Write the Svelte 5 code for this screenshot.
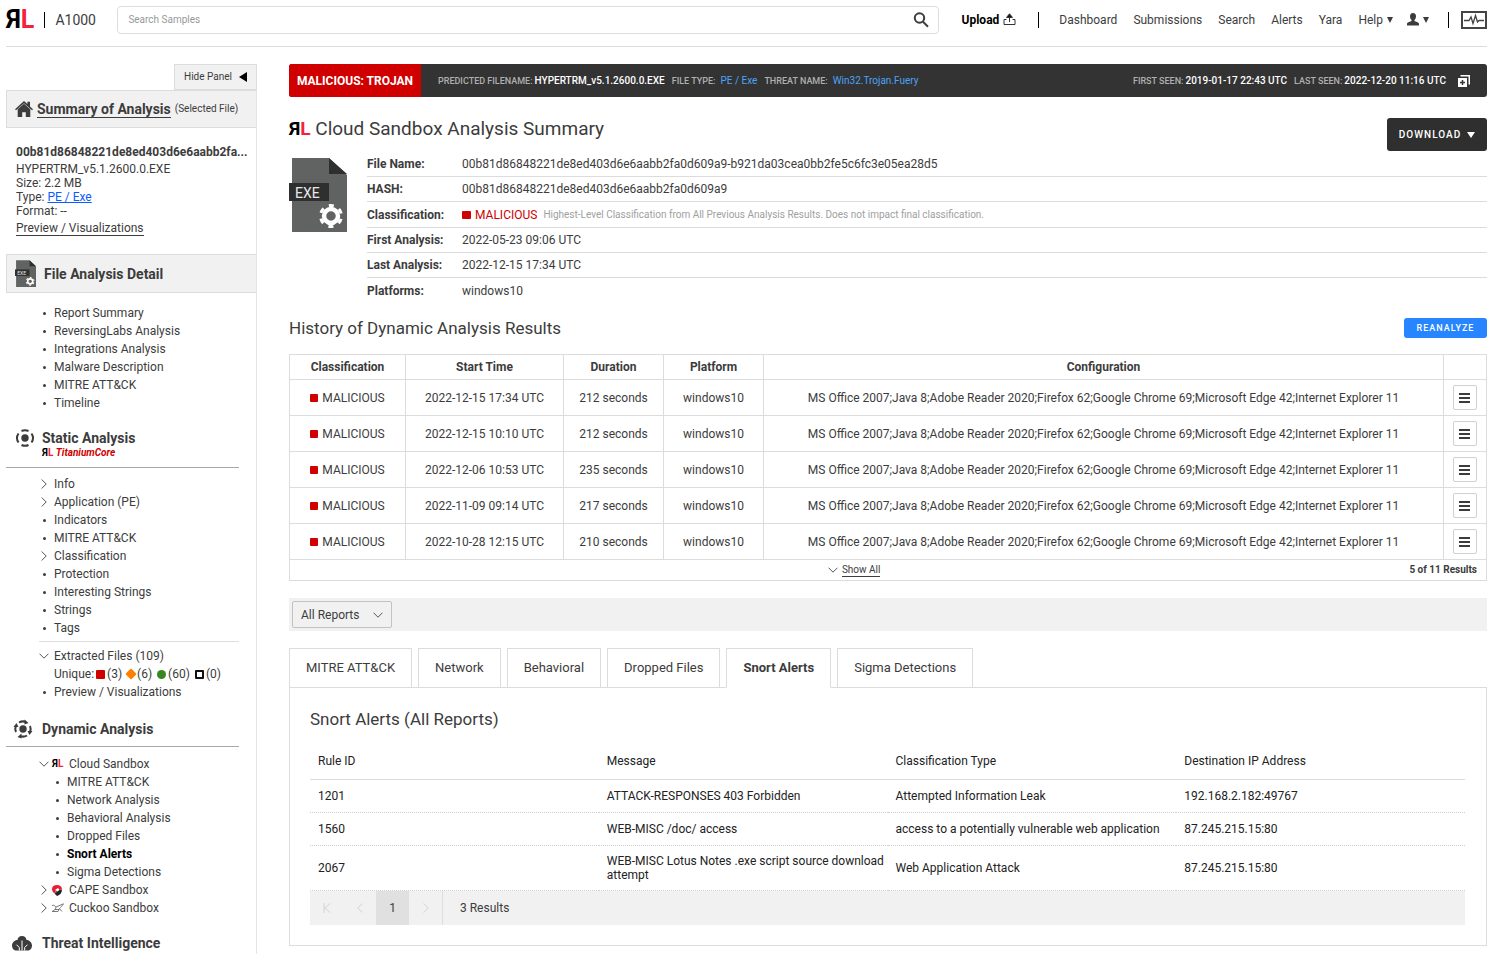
<script>
    let navLinks = ['Dashboard', 'Submissions', 'Search', 'Alerts', 'Yara'];

    let reportLinks = [
        'Report Summary',
        'ReversingLabs Analysis',
        'Integrations Analysis',
        'Malware Description',
        'MITRE ATT&CK',
        'Timeline'
    ];

    let staticLinks = [
        { name: 'Info', expandable: true },
        { name: 'Application (PE)', expandable: true },
        { name: 'Indicators' },
        { name: 'MITRE ATT&CK' },
        { name: 'Classification', expandable: true },
        { name: 'Protection' },
        { name: 'Interesting Strings' },
        { name: 'Strings' },
        { name: 'Tags' }
    ];

    let sandboxLinks = [
        'MITRE ATT&CK',
        'Network Analysis',
        'Behavioral Analysis',
        'Dropped Files',
        'Snort Alerts',
        'Sigma Detections'
    ];

    const hash = '00b81d86848221de8ed403d6e6aabb2fa0d609a9';
    const configuration = 'MS Office 2007;Java 8;Adobe Reader 2020;Firefox 62;Google Chrome 69;Microsoft Edge 42;Internet Explorer 11';
    let history = [
        { start: '2022-12-15 17:34 UTC', duration: 212 },
        { start: '2022-12-15 10:10 UTC', duration: 212 },
        { start: '2022-12-06 10:53 UTC', duration: 235 },
        { start: '2022-11-09 09:14 UTC', duration: 217 },
        { start: '2022-10-28 12:15 UTC', duration: 210 }
    ];

    let tabs = ['MITRE ATT&CK', 'Network', 'Behavioral', 'Dropped Files', 'Snort Alerts', 'Sigma Detections'];
    let activeTab = 'Snort Alerts';

    let alerts = [
        { id: 1201, message: 'ATTACK-RESPONSES 403 Forbidden', type: 'Attempted Information Leak', ip: '192.168.2.182:49767' },
        { id: 1560, message: 'WEB-MISC /doc/ access', type: 'access to a potentially vulnerable web application', ip: '87.245.215.15:80' },
        { id: 2067, message: 'WEB-MISC Lotus Notes .exe script source download attempt', type: 'Web Application Attack', ip: '87.245.215.15:80' }
    ];

    let report = 'All Reports';
    let search = '';
</script>

{#snippet logo()}
    <span class="logo"><span>Я</span><span class="logo-l">L</span></span>
{/snippet}

{#snippet chevronRight()}
    <svg class="chevron" width="6" height="10" viewBox="0 0 6 10"><path d="M.7.5 5.2 5 .7 9.5" /></svg>
{/snippet}

{#snippet chevronDown()}
    <svg class="chevron" width="10" height="6" viewBox="0 0 10 6"><path d="M.5.7 5 5.2 9.5.7" /></svg>
{/snippet}

{#snippet exeFile(size)}
    <svg class="exe" width={size} height={size * 76 / 58} viewBox="0 0 58 76">
        <path fill="#606361" d="M3 1h37l18 17v57H3z" />
        <path fill="#2f2f2f" d="M40 1v16h18z" />
        <path fill="#2f2f2f" d="M0 26h40v18H0z" />
        <text x="6" y="41" font-size="14" fill="#e8e8e8">EXE</text>
        <circle cx="42" cy="59" r="7" fill="none" stroke="#fff" stroke-width="4.500" />
        <circle cx="42" cy="59" r="10.500" fill="none" stroke="#fff" stroke-width="3" stroke-dasharray="5 6" stroke-dashoffset="-3" />
    </svg>
{/snippet}

<div class="app">
    <header>
        <a class="brand" href="#home">{@render logo()}</a>
        <span class="separator"></span>
        <span class="product">A1000</span>
        <form class="search" role="search">
            <input type="search" aria-label="Search Samples" placeholder="Search Samples" bind:value={search}>
            <button type="button" aria-label="Search">
                <svg width="16" height="16" viewBox="0 0 16 16"><circle cx="6.500" cy="6" r="4.700" /><path d="m10 9.700 5 5" /></svg>
            </button>
        </form>
        <button class="upload">
            Upload
            <svg width="13" height="13" viewBox="0 0 13 13"><path d="M3.500 6.500H1v5h11v-5H9.500M6.500 9V2" /><path class="solid" d="M3.500 4.500 6.500.8l3 3.700z" /></svg>
        </button>
        <span class="separator"></span>
        <nav>
            {#each navLinks as link}
                <a href="#{link}">{link}</a>
            {/each}
            <button>Help <svg width="6" height="6" viewBox="0 0 6 6"><path d="M0 0h6L3 6z" /></svg></button>
            <button aria-label="Account">
                <svg width="12" height="13" viewBox="0 0 12 13"><path d="M6 0c2 0 3 1.400 3 3.300 0 1.500-.6 3-1.500 3.700v1c1 .8 4.500 1 4.500 3v1.500H0V11c0-2 3.500-2.200 4.500-3V7C3.600 6.300 3 4.800 3 3.300 3 1.400 4 0 6 0z" /></svg>
                <svg width="6" height="6" viewBox="0 0 6 6"><path d="M0 0h6L3 6z" /></svg>
            </button>
        </nav>
        <span class="separator"></span>
        <button class="activity" aria-label="Activity">
            <svg width="26" height="18" viewBox="0 0 26 18"><path d="M1 1h24v16H1z" stroke-width="2" /><path d="M3 9.500h5l2-3.500 2 6.500 2.500-8 2 6.500 1.500-1.500h5" stroke-width="1.300" /></svg>
        </button>
    </header>

    <div class="layout">
        <aside>
            <button class="hide-panel">Hide Panel <svg width="8" height="10" viewBox="0 0 8 10"><path d="M8 0v10L0 5z" /></svg></button>
            <div class="side">
                <div class="side-box">
                    <svg class="home" width="18" height="16" viewBox="0 0 18 16"><path d="M9 0 0 8.200l1 1.100L9 2.200l8 7.100 1-1.100-3-2.800V.8h-2.600v2.300z" /><path d="M9 2.700 2.700 8.300V16h4.500v-4.700h3.600V16h4.500V8.300z" /></svg>
                    <a class="title" href="#summary">Summary of Analysis</a>
                    <small>(Selected File)</small>
                </div>
                <div class="file">
                    <strong title={hash}>{hash.slice(0, 33)}...</strong>
                    <span>HYPERTRM_v5.1.2600.0.EXE</span>
                    <span>Size: 2.2 MB</span>
                    <span>Type: <a class="blue" href="#type">PE / Exe</a></span>
                    <span>Format: --</span>
                    <a class="preview" href="#preview">Preview / Visualizations</a>
                </div>
                <div class="side-box detail">
                    {@render exeFile(21)}
                    <h2>File Analysis Detail</h2>
                </div>
                <ul class="reports">
                    {#each reportLinks as link}
                        <li><span class="mark dot"></span><a href="#report">{link}</a></li>
                    {/each}
                </ul>

                <div class="section">
                    <svg width="18" height="18" viewBox="0 0 18 18"><circle class="core" cx="9" cy="9" r="3.700" /><path d="M5.500 2a8 8 0 0 1 7 0M15.500 4.500a8 8 0 0 1 0 9M12.500 16a8 8 0 0 1-7 0M2.500 13.500a8 8 0 0 1 0-9" /></svg>
                    <h2>Static Analysis</h2>
                    <div class="titanium">{@render logo()} <em>TitaniumCore</em></div>
                </div>
                <ul class="static">
                    {#each staticLinks as link}
                        <li>
                            {#if link.expandable}
                                <span class="mark">{@render chevronRight()}</span>
                            {:else}
                                <span class="mark dot"></span>
                            {/if}
                            <a href="#static">{link.name}</a>
                        </li>
                    {/each}
                </ul>
                <ul class="extracted">
                    <li><span class="mark">{@render chevronDown()}</span><a href="#extracted">Extracted Files (109)</a></li>
                    <li class="unique">
                        Unique:
                        <i class="square"></i><span>(3)</span>
                        <i class="diamond"></i><span>(6)</span>
                        <i class="circle"></i><span>(60)</span>
                        <i class="unknown"></i><span>(0)</span>
                    </li>
                    <li><span class="mark dot"></span><a href="#preview">Preview / Visualizations</a></li>
                </ul>

                <div class="section dynamic">
                    <svg width="18" height="18" viewBox="0 0 18 18"><circle class="core" cx="9" cy="9" r="3.700" /><path d="M5 2.500a8 8 0 0 1 7-.5M16 6a8 8 0 0 1 0 6.500M13 15.500a8 8 0 0 1-7 .5M2 12a8 8 0 0 1 0-6.500" /><path class="arrow" d="M10.500-.5v5l4-1.500zM13.500 11h5l-3 4zM7.500 13.500v5l-4-1.500zM-.5 7h5l-2-4z" /></svg>
                    <h2>Dynamic Analysis</h2>
                </div>
                <ul class="sandboxes">
                    <li><span class="mark">{@render chevronDown()}</span><span class="vendor">{@render logo()}</span><a href="#cloud">Cloud Sandbox</a></li>
                    {#each sandboxLinks as link}
                        <li class="nested" class:current={link === 'Snort Alerts'}><span class="mark dot"></span><a href="#sandbox">{link}</a></li>
                    {/each}
                    <li>
                        <span class="mark">{@render chevronRight()}</span>
                        <span class="vendor"><svg width="10" height="11" viewBox="0 0 10 11"><path fill="#e8202e" d="M5 0c3 0 5 1.800 5 4.200L7.500 5 6 3 3.500 4.500 4 7.500 2 8C.8 7 0 5.800 0 4 0 1.500 2 0 5 0z" /><path fill="#222" d="M10 4.500C10 8 8 10 5 11 4 10 3 9.300 2.500 8l2-.5L4 5.500l1.500 1L7.500 5z" /></svg></span>
                        <a href="#cape">CAPE Sandbox</a>
                    </li>
                    <li>
                        <span class="mark">{@render chevronRight()}</span>
                        <span class="vendor"><svg width="12" height="10" viewBox="0 0 12 10"><path fill="none" stroke="#777" d="M0 2.500c2-.6 3 .5 4 1.500L11.500.8C10 3 9 4 7.500 5.500L10 8.500M4 4c0 1.500-1 3-4 4.500h6L7.500 5.500M3 6.500h4" /></svg></span>
                        <a href="#cuckoo">Cuckoo Sandbox</a>
                    </li>
                </ul>

                <div class="section threat">
                    <svg width="20" height="15" viewBox="0 0 20 15"><path class="core" d="M10 0c2.500 0 4.200 1.600 4.500 4C17.500 4 20 6.500 20 9.500c0 3-2 5-4.500 5h-11C2 14.500 0 12.500 0 9.500 0 6.500 2.500 4 5.500 4 5.800 1.600 7.500 0 10 0z" /><path class="lines" d="M10 4.500v10M7.300 14.500v-3L4.500 8.700M12.700 14.500v-3l2.800-2.800" /></svg>
                    <h2>Threat Intelligence</h2>
                </div>
            </div>
        </aside>

        <main>
            <div class="banner">
                <strong class="verdict">MALICIOUS: TROJAN</strong>
                <dl>
                    <div><dt>PREDICTED FILENAME:</dt><dd>HYPERTRM_v5.1.2600.0.EXE</dd></div>
                    <div><dt>FILE TYPE:</dt><dd><a href="#type">PE / Exe</a></dd></div>
                    <div><dt>THREAT NAME:</dt><dd><a href="#threat">Win32.Trojan.Fuery</a></dd></div>
                    <div class="seen"><dt>FIRST SEEN:</dt><dd>2019-01-17 22:43 UTC</dd></div>
                    <div><dt>LAST SEEN:</dt><dd>2022-12-20 11:16 UTC</dd></div>
                </dl>
                <button aria-label="Add">
                    <svg width="12" height="12" viewBox="0 0 12 12"><path fill="#fff" d="M0 3h9v9H0zM2.500 0H12v9.500h-1.500v-8h-8z" /><path stroke="#333" stroke-width="1.500" d="M4.500 5v5M2 7.500h5" /></svg>
                </button>
            </div>

            <div class="heading">
                <h1>{@render logo()} Cloud Sandbox Analysis Summary</h1>
                <button class="download">DOWNLOAD <svg width="8" height="6" viewBox="0 0 8 6"><path d="M0 0h8L4 6z" /></svg></button>
            </div>

            <div class="summary">
                {@render exeFile(58)}
                <dl>
                    <div><dt>File Name:</dt><dd>{hash}-b921da03cea0bb2fe5c6fc3e05ea28d5</dd></div>
                    <div><dt>HASH:</dt><dd>{hash}</dd></div>
                    <div class="tall">
                        <dt>Classification:</dt>
                        <dd><i class="square"></i><span class="red">MALICIOUS</span><small>Highest-Level Classification from All Previous Analysis Results. Does not impact final classification.</small></dd>
                    </div>
                    <div><dt>First Analysis:</dt><dd>2022-05-23 09:06 UTC</dd></div>
                    <div><dt>Last Analysis:</dt><dd>2022-12-15 17:34 UTC</dd></div>
                    <div><dt>Platforms:</dt><dd>windows10</dd></div>
                </dl>
            </div>

            <div class="history-heading">
                <h2>History of Dynamic Analysis Results</h2>
                <button>REANALYZE</button>
            </div>
            <table class="history">
                <thead>
                    <tr>
                        <th class="classification">Classification</th>
                        <th class="start">Start Time</th>
                        <th class="narrow">Duration</th>
                        <th class="narrow">Platform</th>
                        <th>Configuration</th>
                        <th class="actions"></th>
                    </tr>
                </thead>
                <tbody>
                    {#each history as run}
                        <tr>
                            <td><i class="square"></i>MALICIOUS</td>
                            <td>{run.start}</td>
                            <td>{run.duration} seconds</td>
                            <td>windows10</td>
                            <td>{configuration}</td>
                            <td>
                                <button aria-label="Actions"><svg width="12" height="10" viewBox="0 0 12 10"><path d="M0 1h11M0 5h11M0 9h11" /></svg></button>
                            </td>
                        </tr>
                    {/each}
                </tbody>
            </table>
            <div class="history-footer">
                <button>{@render chevronDown()}<span>Show All</span></button>
                <strong>5 of 11 Results</strong>
            </div>

            <div class="filter">
                <div class="select">
                    <select aria-label="Reports" bind:value={report}>
                        <option>All Reports</option>
                    </select>
                    {@render chevronDown()}
                </div>
            </div>

            <div class="tabs" role="tablist">
                {#each tabs as tab}
                    <button role="tab" aria-selected={tab === activeTab} class:active={tab === activeTab} on:click={() => activeTab = tab}>{tab}</button>
                {/each}
            </div>
            <section class="panel">
                <h2>{activeTab} ({report})</h2>
                <table class="alerts">
                    <thead>
                        <tr>
                            <th>Rule ID</th>
                            <th>Message</th>
                            <th>Classification Type</th>
                            <th>Destination IP Address</th>
                        </tr>
                    </thead>
                    <tbody>
                        {#each alerts as alert}
                            <tr>
                                <td>{alert.id}</td>
                                <td>{alert.message}</td>
                                <td>{alert.type}</td>
                                <td>{alert.ip}</td>
                            </tr>
                        {/each}
                    </tbody>
                </table>
                <div class="pager">
                    <button disabled aria-label="First page"><svg width="8" height="10" viewBox="0 0 8 10"><path d="M1 0v10M7 .5 2 5l5 4.500" /></svg></button>
                    <button disabled aria-label="Previous page"><svg width="6" height="10" viewBox="0 0 6 10"><path d="M5.300.5.800 5l4.500 4.500" /></svg></button>
                    <button class="page">1</button>
                    <button disabled aria-label="Next page"><svg width="6" height="10" viewBox="0 0 6 10"><path d="M.7.5 5.200 5 .7 9.500" /></svg></button>
                    <span>3 Results</span>
                </div>
            </section>
        </main>
    </div>
</div>

<style>
    :global(body){
        margin: 0;
        background: #fff;
    }
    .app{
        display: flex;
        flex-direction: column;
        min-height: 100vh;
        padding: 0 13px 0 6px;
        box-sizing: border-box;
        font: 12px/14px Roboto, "Liberation Sans", sans-serif;
        color: #3c3c3c;
    }
    button, input, select{
        font: inherit;
        color: inherit;
        box-sizing: border-box;
    }
    button{
        display: flex;
        align-items: center;
        justify-content: center;
        padding: 0;
        border: 0;
        background: none;
        cursor: pointer;
    }
    a{
        color: inherit;
        text-decoration: none;
    }
    h1, h2, dl, dd, ul{
        margin: 0;
        padding: 0;
    }
    svg{
        flex: none;
        fill: #3c3c3c;
    }
    small{
        font-size: 10px;
    }
    .logo{
        font-weight: 700;
        color: #000;
    }
    .logo-l{
        color: #f5213c;
    }
    .chevron{
        fill: none;
        stroke: #555;
    }
    .exe text{
        font-family: Roboto, "Liberation Sans", sans-serif;
    }

    /* status marks */
    .square, .circle, .unknown, .diamond{
        flex: none;
        display: inline-block;
        width: 9px;
        height: 9px;
        box-sizing: border-box;
        border-radius: 1px;
        background: #d00000;
    }
    .circle{
        border-radius: 50%;
        background: #37861f;
    }
    .diamond{
        width: 8px;
        height: 8px;
        background: #ff7f00;
        transform: rotate(45deg);
    }
    .unknown{
        border: 2px solid #111;
        background: #fff;
    }

    /* header */
    header{
        display: flex;
        align-items: center;
        height: 47px;
        padding-bottom: 7px;
        box-sizing: border-box;
        border-bottom: 1px solid #dcdcdc;
    }
    .brand{
        font-size: 25px;
        line-height: 28px;
    }
    .separator{
        width: 1px;
        height: 16px;
        background: #000;
    }
    .brand + .separator{
        margin: 0 10px;
    }
    .product{
        width: 62px;
        font-size: 14px;
    }
    .search{
        flex: 1;
        display: flex;
        height: 28px;
        box-sizing: border-box;
        border: 1px solid #dedede;
        border-radius: 4px;
    }
    .search input{
        flex: 1;
        min-width: 0;
        padding: 0 10px;
        border: 0;
        background: none;
        outline: none;
        font-size: 10px;
    }
    .search input::placeholder{
        color: #999;
    }
    .search button{
        width: 34px;
    }
    .search svg{
        fill: none;
        stroke: #3c3c3c;
        stroke-width: 2;
    }
    .upload{
        gap: 4px;
        margin: 0 22px 0 23px;
        font-weight: 700;
        color: #000;
    }
    .upload svg{
        fill: none;
        stroke: #333;
    }
    .upload .solid{
        fill: #111;
    }
    nav{
        display: flex;
        gap: 16px;
        margin: 0 19px 0 20px;
    }
    nav button{
        gap: 4px;
    }
    nav button + button{
        margin-left: -2px;
    }
    .activity{
        margin-left: 12px;
    }
    .activity svg{
        fill: none;
        stroke: #444;
    }

    .layout{
        flex: 1;
        display: flex;
        gap: 32px;
        padding-top: 17px;
    }

    /* side panel */
    aside{
        flex: none;
        display: flex;
        flex-direction: column;
        width: 251px;
    }
    .hide-panel{
        align-self: flex-end;
        gap: 7px;
        width: 83px;
        height: 26px;
        border: 1px solid #dcdcdc;
        background: #f1f1f1;
        font-size: 10px;
    }
    .hide-panel svg{
        fill: #000;
    }
    .side{
        flex: 1;
        border-right: 1px solid #e4e4e4;
    }
    .side-box{
        display: flex;
        align-items: center;
        gap: 4px;
        height: 38px;
        padding-left: 8px;
        box-sizing: border-box;
        border: 1px solid #dcdcdc;
        border-right: 0;
        background: #f1f1f1;
    }
    .title{
        border-bottom: 1px solid #3c3c3c;
    }
    .title, .side h2{
        font-size: 14px;
        font-weight: 700;
        line-height: 16px;
    }
    .file{
        display: flex;
        flex-direction: column;
        align-items: flex-start;
        padding: 17px 0 18px 10px;
    }
    .file strong{
        margin-bottom: 3px;
        white-space: nowrap;
    }
    .blue{
        color: #0b5cff;
        text-decoration: underline;
    }
    .preview{
        margin-top: 3px;
        border-bottom: 1px solid #3c3c3c;
    }
    .detail{
        gap: 8px;
        height: 39px;
    }
    ul{
        list-style: none;
    }
    li{
        display: flex;
        align-items: center;
        height: 18px;
    }
    .mark{
        display: flex;
        justify-content: center;
        width: 10px;
        margin-right: 5px;
    }
    .dot::before{
        content: '';
        width: 3px;
        height: 3px;
        border-radius: 50%;
        background: #3c3c3c;
    }
    .reports, .static, .extracted, .sandboxes{
        padding-left: 33px;
    }
    .reports{
        padding-top: 11px;
    }
    .section{
        display: grid;
        grid-template-columns: 26px 1fr;
        align-items: center;
        margin: 18px 17px 0 0;
        padding: 0 0 7px 10px;
        border-bottom: 1px solid #a8a8a8;
    }
    .section svg{
        grid-row: 1;
        margin: -1px 0;
        overflow: visible;
        fill: none;
        stroke: #3c3c3c;
        stroke-width: 2;
    }
    .section .core, .section .arrow{
        fill: #3c3c3c;
        stroke: none;
    }
    .section .lines{
        stroke: #fff;
        stroke-width: 1;
    }
    .titanium{
        grid-column: 2;
        font-size: 10px;
        font-weight: 700;
        color: #d00000;
    }
    .static{
        padding-top: 7px;
        padding-bottom: 4px;
    }
    .extracted{
        margin: 0 17px 0 33px;
        padding: 5px 0 0;
        border-top: 1px solid #dedede;
    }
    .unique{
        gap: 2px;
        padding-left: 15px;
        white-space: nowrap;
    }
    .unique span + i{
        margin-left: 3px;
    }
    .dynamic{
        margin-top: 20px;
        padding: 0 0 9px 8px;
        grid-template-columns: 28px 1fr;
    }
    .sandboxes{
        padding-top: 8px;
    }
    .sandboxes .mark{
        margin-right: 3px;
    }
    .vendor{
        display: flex;
        width: 12px;
        margin-right: 5px;
        font-size: 10px;
    }
    .nested{
        padding-left: 13px;
    }
    .sandboxes .nested .mark{
        margin-right: 5px;
    }
    .current a{
        font-weight: 700;
        color: #000;
    }
    .threat{
        grid-template-columns: 30px 1fr;
        padding: 0 0 0 6px;
        border: 0;
    }

    /* main column */
    main{
        flex: 1;
        min-width: 0;
    }
    .banner{
        display: flex;
        align-items: center;
        height: 33px;
        padding-right: 17px;
        border-radius: 3px;
        background: #333;
        overflow: hidden;
    }
    .verdict{
        display: flex;
        align-items: center;
        justify-content: center;
        width: 132px;
        height: 100%;
        background: #d00000;
        color: #fff;
    }
    .banner dl{
        flex: 1;
        display: flex;
        gap: 7px;
        margin: 0 12px 0 17px;
        font-size: 10px;
        font-weight: 500;
        color: #fff;
        white-space: nowrap;
    }
    .banner dl div{
        display: flex;
        align-items: center;
        gap: 2px;
    }
    .banner .seen{
        margin-left: auto;
    }
    .banner dt{
        font-size: 9px;
        color: #b0b0b0;
    }
    .banner a{
        padding-left: 3px;
        font-weight: 400;
        color: #4da3f5;
    }
    .heading{
        display: flex;
        justify-content: space-between;
        align-items: flex-start;
        padding-top: 21px;
    }
    h1{
        font-size: 19px;
        font-weight: 400;
        line-height: 22px;
    }
    .download{
        gap: 6px;
        width: 100px;
        height: 33px;
        border-radius: 3px;
        background: #2f2f2f;
        color: #fff;
        font-size: 10px;
        font-weight: 500;
        letter-spacing: 1px;
    }
    .download svg{
        fill: #fff;
    }
    .summary{
        display: flex;
        align-items: flex-start;
        gap: 20px;
    }
    .summary .exe{
        margin-top: 6px;
    }
    .summary dl{
        flex: 1;
        padding-top: 1px;
    }
    .summary dl div{
        display: flex;
        align-items: center;
        height: 25px;
        box-sizing: border-box;
        border-bottom: 1px solid #dcdcdc;
    }
    .summary dl div:last-child{
        border: 0;
    }
    .summary .tall{
        height: 26px;
    }
    .summary dt{
        width: 95px;
        font-weight: 700;
    }
    .summary dd{
        display: flex;
        align-items: center;
    }
    .summary .square{
        height: 8px;
    }
    .red{
        margin: 0 6px 0 4px;
        color: #d00000;
    }
    .summary small{
        color: #a0a0a0;
    }
    .history-heading{
        display: flex;
        justify-content: space-between;
        align-items: center;
        padding: 15px 0 16px;
    }
    .history-heading h2, .panel h2{
        font-size: 17px;
        font-weight: 400;
        line-height: 20px;
    }
    .history-heading button{
        width: 83px;
        height: 20px;
        border-radius: 3px;
        background: #2685ff;
        color: #fff;
        font-size: 9px;
        font-weight: 500;
        letter-spacing: 1px;
    }
    table{
        width: 100%;
        border-collapse: collapse;
        table-layout: fixed;
    }
    .history th, .history td{
        height: 36px;
        padding: 0;
        box-sizing: border-box;
        border: 1px solid #dcdcdc;
        text-align: center;
    }
    .history th{
        height: 25px;
    }
    .history .classification{
        width: 116px;
    }
    .history .start{
        width: 158px;
    }
    .history .narrow{
        width: 100px;
    }
    .history .actions{
        width: 43px;
    }
    .history .square{
        width: 8px;
        height: 8px;
        margin-right: 4px;
    }
    .history button{
        width: 24px;
        height: 25px;
        margin: 0 auto;
        border: 1px solid #d0d0d0;
        border-radius: 2px;
        background: #fff;
    }
    .history svg{
        stroke: #3c3c3c;
        stroke-width: 2;
    }
    .history-footer{
        display: flex;
        align-items: center;
        height: 21px;
        padding: 0 9px;
        box-sizing: border-box;
        border: 1px solid #dcdcdc;
        border-top: 0;
        font-size: 10px;
        line-height: 12px;
    }
    .history-footer button{
        flex: 1;
        gap: 4px;
    }
    .history-footer button span{
        border-bottom: 1px solid #3c3c3c;
    }
    .filter{
        display: flex;
        margin: 17px 0;
        padding: 3px;
        background: #f1f1f1;
    }
    .select{
        display: grid;
        align-items: center;
        width: 100px;
    }
    .select select{
        grid-area: 1 / 1;
        appearance: none;
        width: 100%;
        height: 27px;
        padding: 0 8px;
        border: 1px solid #c2c2c2;
        border-radius: 2px;
        background: none;
    }
    .select .chevron{
        grid-area: 1 / 1;
        justify-self: end;
        margin-right: 9px;
        pointer-events: none;
    }
    .tabs{
        display: flex;
        gap: 6px;
    }
    .tabs button{
        height: 40px;
        margin-bottom: -1px;
        padding: 0 16px;
        border: 1px solid #dcdcdc;
        background: #fff;
        font-size: 13px;
        z-index: 1;
    }
    .tabs .active{
        border-bottom-color: #fff;
        font-weight: 700;
    }
    .panel{
        padding: 21px 21px 20px 20px;
        border: 1px solid #dcdcdc;
    }
    .alerts{
        margin-top: 15px;
        color: #222;
    }
    .alerts th, .alerts td{
        height: 33px;
        padding: 0 3px 0 8px;
        box-sizing: border-box;
        border-bottom: 1px dotted #d0d0d0;
        font-weight: 400;
        text-align: left;
    }
    .alerts th{
        height: 35px;
        border-bottom: 1px solid #dcdcdc;
    }
    .alerts tr:last-child td{
        height: 45px;
    }
    .pager{
        display: flex;
        align-items: center;
        height: 34px;
        background: #f1f1f1;
    }
    .pager button{
        width: 33px;
        height: 100%;
    }
    .pager svg{
        fill: none;
        stroke: #d2d2d2;
    }
    .pager .page{
        background: #e0e0e0;
    }
    .pager span{
        padding-left: 17px;
        border-left: 1px solid #dedede;
        line-height: 34px;
    }
</style>
